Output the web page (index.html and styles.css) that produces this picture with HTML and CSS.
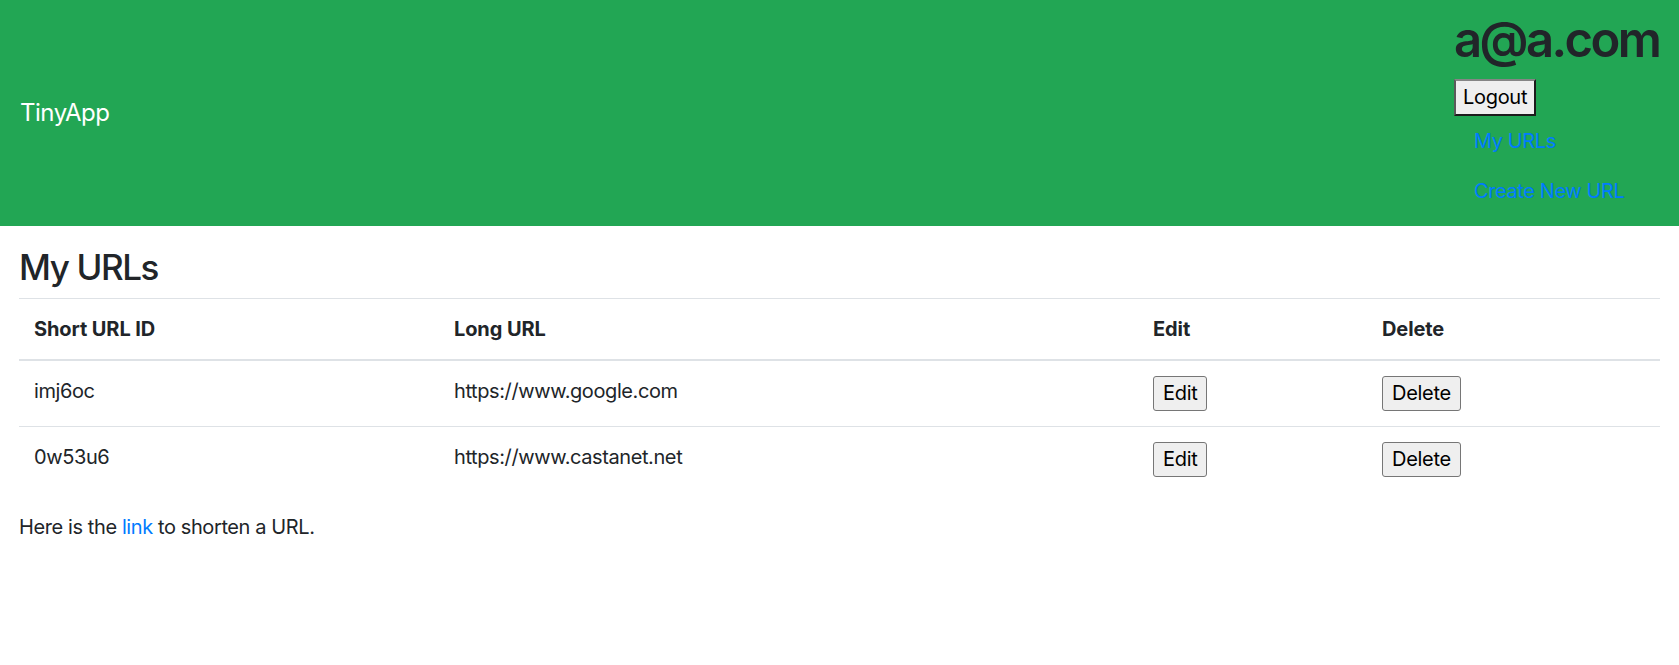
FILE: index.html
```html
<!DOCTYPE html>
<html lang="en">
<head>
<meta charset="utf-8">
<title>TinyApp - My URLs</title>
<link rel="stylesheet" href="styles.css">
</head>
<body>
<nav class="navbar">
  <a class="brand" href="#">TinyApp</a>
  <div class="user">
    <h1 class="email">a@a.com</h1>
    <form class="logout-form"><button class="logout" type="button">Logout</button></form>
    <ul class="nav">
      <li><a class="nav-link" href="#">My URLs</a></li>
      <li><a class="nav-link" href="#">Create New URL</a></li>
    </ul>
  </div>
</nav>
<main class="content">
  <h3 class="title">My URLs</h3>
  <table class="urls">
    <colgroup>
      <col class="c-id">
      <col class="c-long">
      <col class="c-edit">
      <col class="c-del">
    </colgroup>
    <thead>
      <tr>
        <th>Short URL ID</th>
        <th>Long URL</th>
        <th>Edit</th>
        <th>Delete</th>
      </tr>
    </thead>
    <tbody>
      <tr>
        <td>imj6oc</td>
        <td>https://www.google.com</td>
        <td><button class="btn" type="button">Edit</button></td>
        <td><button class="btn" type="button">Delete</button></td>
      </tr>
      <tr>
        <td>0w53u6</td>
        <td>https://www.castanet.net</td>
        <td><button class="btn" type="button">Edit</button></td>
        <td><button class="btn" type="button">Delete</button></td>
      </tr>
    </tbody>
  </table>
  <p class="note">Here is the <a class="link" href="#">link</a> to shorten a URL.</p>
</main>
</body>
</html>
```

FILE: styles.css
```css
* { box-sizing: border-box; }

body {
  margin: 0;
  font-family: Inter, "Liberation Sans", sans-serif;
  font-size: 20px;
  line-height: 1.5;
  letter-spacing: -0.4px;
  color: #212529;
  background: #fff;
}

.navbar {
  display: flex;
  justify-content: space-between;
  align-items: center;
  padding: 10px 20px;
  background: #22a654;
}

.brand {
  color: #fff;
  font-size: 24px;
  line-height: 37.5px;
  padding: 5px 0;
  letter-spacing: -0.5px;
  text-decoration: none;
}

.user {
  width: 205px;
}

.email {
  margin: 0 0 9px;
  font-size: 49px;
  font-weight: 600;
  line-height: 60px;
  letter-spacing: -2.6px;
  white-space: nowrap;
  color: #212529;
}

.logout-form {
  margin: 0;
}

.logout {
  font-family: inherit;
  font-size: 20px;
  line-height: 31px;
  letter-spacing: -0.3px;
  padding: 1px 7px;
  background: #efefef;
  color: #000;
  border: 2px solid;
  border-color: #858585 #1c1c1c #1c1c1c #5a5a5a;
  border-radius: 0;
}

.nav {
  list-style: none;
  margin: 0;
  padding: 0;
}

.nav-link {
  display: block;
  padding: 10px 20px;
  line-height: 30px;
  color: #007bff;
  text-decoration: none;
}

.content {
  padding: 0 19px;
}

.title {
  margin: 20px 0 10px;
  font-size: 35px;
  font-weight: 500;
  line-height: 42px;
  letter-spacing: -1.4px;
}

.urls {
  width: 100%;
  border-collapse: collapse;
  table-layout: fixed;
  margin-bottom: 20px;
}

.c-id { width: 420px; }
.c-long { width: 699px; }
.c-edit { width: 229px; }
.c-del { width: 293px; }

.urls th,
.urls td {
  padding: 15px;
  text-align: left;
  vertical-align: top;
  line-height: 30px;
  border-top: 1px solid #dee2e6;
}

.urls thead th {
  vertical-align: bottom;
  font-weight: 700;
  letter-spacing: -0.1px;
  border-bottom: 2px solid #dee2e6;
}

.btn {
  font-family: inherit;
  font-size: 20px;
  line-height: 31px;
  letter-spacing: -0.3px;
  padding: 1px 9px;
  background: #efefef;
  color: #000;
  border: 1px solid #767676;
  border-radius: 3px;
}

.note {
  margin: 0 0 20px;
}

.link {
  color: #007bff;
  text-decoration: none;
}
```
